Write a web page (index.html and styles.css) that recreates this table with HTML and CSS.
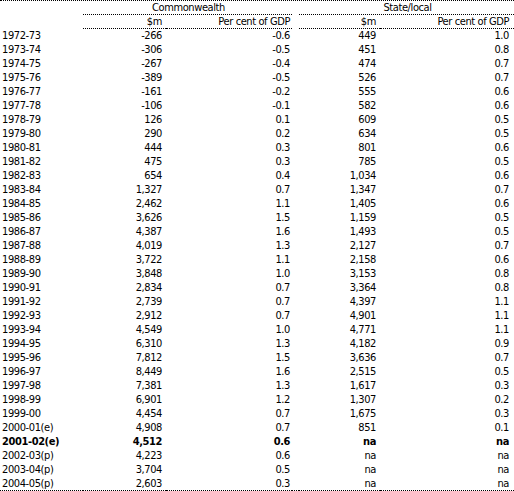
FILE: index.html
```html
<!DOCTYPE html>
<html lang="en">
<head>
  <meta charset="UTF-8">
  <title>Underlying cash balance</title>
  <link rel="stylesheet" href="styles.css">
</head>
<body>
  <table class="data-table">
    <colgroup>
      <col class="col-year">
      <col class="col-m">
      <col class="col-pc">
      <col class="col-gap">
      <col class="col-m2">
      <col class="col-pc2">
    </colgroup>
    <thead>
      <tr class="group-row">
        <th class="blank"></th>
        <th colspan="2" class="group">Commonwealth</th>
        <th class="blank"></th>
        <th colspan="2" class="group">State/local</th>
      </tr>
      <tr class="unit-row">
        <th class="blank"></th>
        <th class="num m">$m</th>
        <th class="num pc">Per cent of GDP</th>
        <th class="blank"></th>
        <th class="num m2">$m</th>
        <th class="num pc2">Per cent of GDP</th>
      </tr>
    </thead>
    <tbody>
      <tr><td>1972-73</td><td class="num m">-266</td><td class="num pc">-0.6</td><td></td><td class="num m2">449</td><td class="num pc2">1.0</td></tr>
      <tr><td>1973-74</td><td class="num m">-306</td><td class="num pc">-0.5</td><td></td><td class="num m2">451</td><td class="num pc2">0.8</td></tr>
      <tr><td>1974-75</td><td class="num m">-267</td><td class="num pc">-0.4</td><td></td><td class="num m2">474</td><td class="num pc2">0.7</td></tr>
      <tr><td>1975-76</td><td class="num m">-389</td><td class="num pc">-0.5</td><td></td><td class="num m2">526</td><td class="num pc2">0.7</td></tr>
      <tr><td>1976-77</td><td class="num m">-161</td><td class="num pc">-0.2</td><td></td><td class="num m2">555</td><td class="num pc2">0.6</td></tr>
      <tr><td>1977-78</td><td class="num m">-106</td><td class="num pc">-0.1</td><td></td><td class="num m2">582</td><td class="num pc2">0.6</td></tr>
      <tr><td>1978-79</td><td class="num m">126</td><td class="num pc">0.1</td><td></td><td class="num m2">609</td><td class="num pc2">0.5</td></tr>
      <tr><td>1979-80</td><td class="num m">290</td><td class="num pc">0.2</td><td></td><td class="num m2">634</td><td class="num pc2">0.5</td></tr>
      <tr><td>1980-81</td><td class="num m">444</td><td class="num pc">0.3</td><td></td><td class="num m2">801</td><td class="num pc2">0.6</td></tr>
      <tr><td>1981-82</td><td class="num m">475</td><td class="num pc">0.3</td><td></td><td class="num m2">785</td><td class="num pc2">0.5</td></tr>
      <tr><td>1982-83</td><td class="num m">654</td><td class="num pc">0.4</td><td></td><td class="num m2">1,034</td><td class="num pc2">0.6</td></tr>
      <tr><td>1983-84</td><td class="num m">1,327</td><td class="num pc">0.7</td><td></td><td class="num m2">1,347</td><td class="num pc2">0.7</td></tr>
      <tr><td>1984-85</td><td class="num m">2,462</td><td class="num pc">1.1</td><td></td><td class="num m2">1,405</td><td class="num pc2">0.6</td></tr>
      <tr><td>1985-86</td><td class="num m">3,626</td><td class="num pc">1.5</td><td></td><td class="num m2">1,159</td><td class="num pc2">0.5</td></tr>
      <tr><td>1986-87</td><td class="num m">4,387</td><td class="num pc">1.6</td><td></td><td class="num m2">1,493</td><td class="num pc2">0.5</td></tr>
      <tr><td>1987-88</td><td class="num m">4,019</td><td class="num pc">1.3</td><td></td><td class="num m2">2,127</td><td class="num pc2">0.7</td></tr>
      <tr><td>1988-89</td><td class="num m">3,722</td><td class="num pc">1.1</td><td></td><td class="num m2">2,158</td><td class="num pc2">0.6</td></tr>
      <tr><td>1989-90</td><td class="num m">3,848</td><td class="num pc">1.0</td><td></td><td class="num m2">3,153</td><td class="num pc2">0.8</td></tr>
      <tr><td>1990-91</td><td class="num m">2,834</td><td class="num pc">0.7</td><td></td><td class="num m2">3,364</td><td class="num pc2">0.8</td></tr>
      <tr><td>1991-92</td><td class="num m">2,739</td><td class="num pc">0.7</td><td></td><td class="num m2">4,397</td><td class="num pc2">1.1</td></tr>
      <tr><td>1992-93</td><td class="num m">2,912</td><td class="num pc">0.7</td><td></td><td class="num m2">4,901</td><td class="num pc2">1.1</td></tr>
      <tr><td>1993-94</td><td class="num m">4,549</td><td class="num pc">1.0</td><td></td><td class="num m2">4,771</td><td class="num pc2">1.1</td></tr>
      <tr><td>1994-95</td><td class="num m">6,310</td><td class="num pc">1.3</td><td></td><td class="num m2">4,182</td><td class="num pc2">0.9</td></tr>
      <tr><td>1995-96</td><td class="num m">7,812</td><td class="num pc">1.5</td><td></td><td class="num m2">3,636</td><td class="num pc2">0.7</td></tr>
      <tr><td>1996-97</td><td class="num m">8,449</td><td class="num pc">1.6</td><td></td><td class="num m2">2,515</td><td class="num pc2">0.5</td></tr>
      <tr><td>1997-98</td><td class="num m">7,381</td><td class="num pc">1.3</td><td></td><td class="num m2">1,617</td><td class="num pc2">0.3</td></tr>
      <tr><td>1998-99</td><td class="num m">6,901</td><td class="num pc">1.2</td><td></td><td class="num m2">1,307</td><td class="num pc2">0.2</td></tr>
      <tr><td>1999-00</td><td class="num m">4,454</td><td class="num pc">0.7</td><td></td><td class="num m2">1,675</td><td class="num pc2">0.3</td></tr>
      <tr><td>2000-01(e)</td><td class="num m">4,908</td><td class="num pc">0.7</td><td></td><td class="num m2">851</td><td class="num pc2">0.1</td></tr>
      <tr class="current"><td>2001-02(e)</td><td class="num m">4,512</td><td class="num pc">0.6</td><td></td><td class="num m2">na</td><td class="num pc2">na</td></tr>
      <tr><td>2002-03(p)</td><td class="num m">4,223</td><td class="num pc">0.6</td><td></td><td class="num m2">na</td><td class="num pc2">na</td></tr>
      <tr><td>2003-04(p)</td><td class="num m">3,704</td><td class="num pc">0.5</td><td></td><td class="num m2">na</td><td class="num pc2">na</td></tr>
      <tr class="last"><td>2004-05(p)</td><td class="num m">2,603</td><td class="num pc">0.3</td><td></td><td class="num m2">na</td><td class="num pc2">na</td></tr>
    </tbody>
  </table>
</body>
</html>
```

FILE: styles.css
```css
body {
  margin: 0;
  background: #fff;
  color: #000;
  font-family: "DejaVu Sans Condensed", "Liberation Sans", sans-serif;
  font-size: 11px;
  letter-spacing: -0.4px;
}
.data-table {
  width: 514px;
  table-layout: fixed;
  border-collapse: separate;
  border-spacing: 0;
  border-top: 1px dotted #000;
}
.col-year {width: 83px}
.col-m {width: 83px}
.col-pc {width: 126px}
.col-gap {width: 7px}
.col-m2 {width: 81px}
.col-pc2 {width: 134px}

.data-table th,
.data-table td {
  padding: 0 0 0 2px;
  line-height: 14px;
  font-weight: normal;
  white-space: nowrap;
  text-align: left;
  vertical-align: middle;
}
.data-table thead th {
  line-height: 13px;
  border-bottom: 1px dotted transparent;
}
.data-table .group {
  text-align: center;
  border-bottom-color: #000;
}
.unit-row .num {
  border-bottom-color: #000;
}
.data-table .num {text-align: right}
.data-table .m {padding-right: 4px}
.data-table .pc {padding-right: 2px}
.data-table .m2 {padding-right: 4px}
.data-table .pc2 {padding-right: 5px}

.current td {font-weight: bold}
.last td {
  line-height: 13px;
  border-bottom: 1px dotted #000;
}
```
